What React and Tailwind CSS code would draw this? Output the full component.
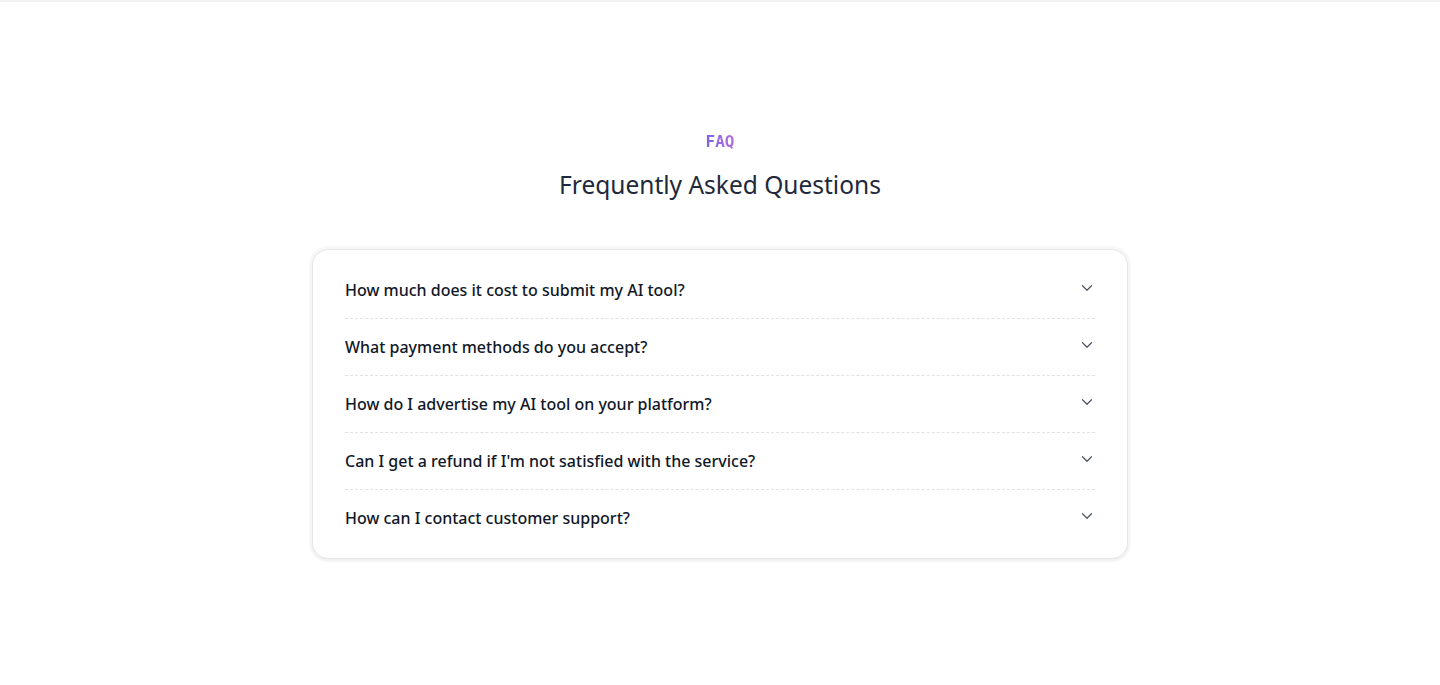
import React from "react";

const questions = [
  "How much does it cost to submit my AI tool?",
  "What payment methods do you accept?",
  "How do I advertise my AI tool on your platform?",
  "Can I get a refund if I'm not satisfied with the service?",
  "How can I contact customer support?",
];

function Chevron() {
  return (
    <svg width="18" height="18" viewBox="0 0 24 24" fill="none" stroke="#4b5563" strokeWidth="1.6" strokeLinecap="round" strokeLinejoin="round">
      <path d="m6 9 6 6 6-6" />
    </svg>
  );
}

export default function App() {
  return (
    <div className="min-h-[685px] bg-white border-t-2 border-[#f1f1f1]" style={{ fontFamily: '"Noto Sans", sans-serif' }}>
      <section className="flex flex-col items-center pt-[127px]">
        <div
          className="text-[16px] font-bold leading-[26px] bg-gradient-to-r from-[#7b63e6] to-[#b36ee0] bg-clip-text text-transparent"
          style={{ fontFamily: '"DejaVu Sans Mono", monospace' }}
        >
          FAQ
        </div>
        <h2 className="mt-[12px] text-[24.5px] leading-[36px] text-[#1e293b] font-normal">Frequently Asked Questions</h2>
        <div className="mt-[46px] w-[816px] rounded-[16px] border border-[#e5e7eb] bg-white py-3 px-8 shadow-[0_0_0_3px_rgba(0,0,0,0.03),0_1px_3px_rgba(0,0,0,0.04)]">
          {questions.map((q, i) => (
            <div
              key={q}
              className={`flex items-center justify-between ${i < questions.length - 1 ? "h-[57px] border-b border-dashed border-[#e2e2e2]" : "h-[56px]"}`}
            >
              <span className="text-[16px] font-medium text-[#111827]">{q}</span>
              <span className="-mr-[1px] -mt-[4px] flex">
                <Chevron />
              </span>
            </div>
          ))}
        </div>
      </section>
    </div>
  );
}
